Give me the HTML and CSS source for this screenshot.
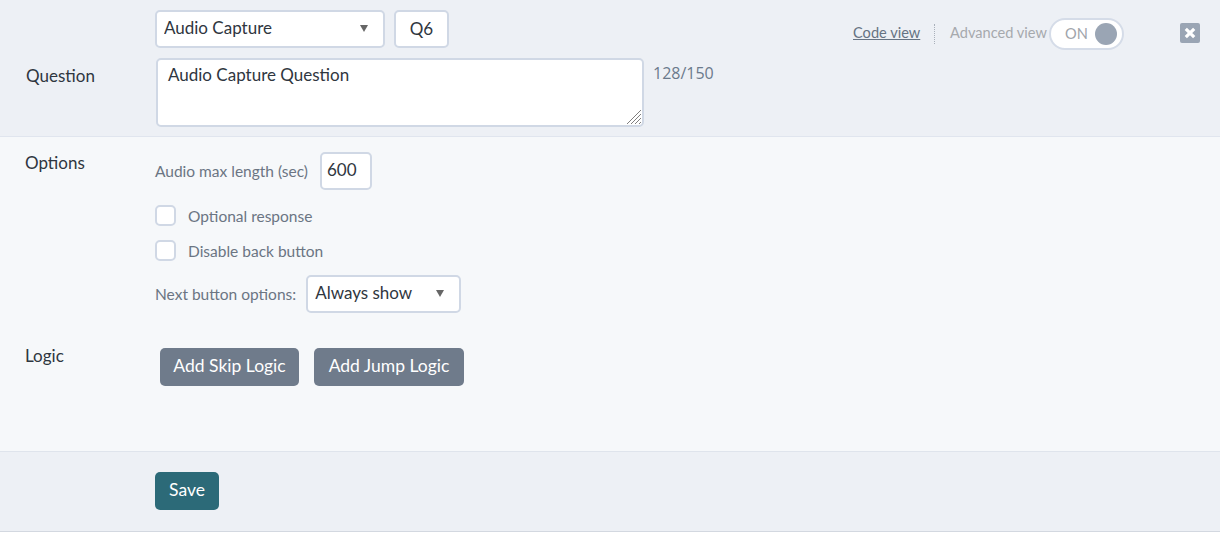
FILE: index.html
```html
<!DOCTYPE html>
<html lang="en">

<head>
    <meta charset="UTF-8">
    <title>Question editor</title>
    <link rel="stylesheet" href="styles.css">
</head>

<body>
    <div class="editor">
        <section class="question-panel">
            <div class="type-row">
                <div class="select-wrap type-select">
                    <select>
                        <option>Audio Capture</option>
                    </select>
                </div>
                <input class="text-box code-box" type="text" value="Q6">
                <div class="toolbar">
                    <a class="code-link" href="#">Code view</a>
                    <span class="toolbar-sep"></span>
                    <span class="toolbar-label">Advanced view</span>
                    <span class="toggle"><span class="toggle-text">ON</span><span class="toggle-knob"></span></span>
                    <span class="close-btn">
                        <svg width="14" height="14" viewBox="0 0 14 14">
                            <path d="M2.8 2.8 L11.2 11.2 M11.2 2.8 L2.8 11.2" stroke="#fff" stroke-width="3.2" fill="none" />
                        </svg>
                    </span>
                </div>
            </div>
            <div class="question-row">
                <label class="row-label question-label">Question</label>
                <div class="textarea-wrap">
                    <textarea class="question-text">Audio Capture Question</textarea>
                    <svg class="resize-grip" width="14" height="14" viewBox="0 0 14 14">
                        <path d="M14 0 L0 14 M14 4 L4 14 M14 8 L8 14 M14 12 L12 14" stroke="#807f7f" stroke-width="1" fill="none" />
                    </svg>
                </div>
                <span class="char-count">128/150</span>
            </div>
        </section>

        <section class="options-panel">
            <div class="options-row">
                <div class="row-label options-label">Options</div>
                <div class="options-body">
                    <div class="length-row">
                        <span class="field-label">Audio max length (sec)</span>
                        <input class="text-box length-box" type="text" value="600">
                    </div>
                    <label class="check-row first-check"><span class="check"></span>Optional response</label>
                    <label class="check-row"><span class="check"></span>Disable back button</label>
                    <div class="next-row">
                        <span class="field-label">Next button options:</span>
                        <div class="select-wrap next-select">
                            <select>
                                <option>Always show</option>
                            </select>
                        </div>
                    </div>
                </div>
            </div>
            <div class="logic-row">
                <div class="row-label logic-label">Logic</div>
                <div class="logic-buttons">
                    <button class="btn btn-grey skip-btn">Add Skip Logic</button>
                    <button class="btn btn-grey jump-btn">Add Jump Logic</button>
                </div>
            </div>
        </section>

        <section class="save-panel">
            <button class="btn btn-save">Save</button>
        </section>
    </div>
</body>

</html>
```

FILE: styles.css
```css
* {
    box-sizing: border-box;
}

body {
    margin: 0;
    background: #fff;
    color: #2f3640;
    font-family: Lato, "Open Sans", sans-serif;
    font-size: 17px;
}

.editor {
    width: 1220px;
}

/* top panel */
.question-panel {
    height: 137px;
    padding: 10px 0 0 155px;
    background: #edf0f5;
    border-bottom: 1px solid #e0e5ee;
}

.type-row {
    display: flex;
    height: 38px;
}

.select-wrap {
    position: relative;
}

.select-wrap select {
    width: 100%;
    height: 38px;
    padding: 0 0 3px 7px;
    appearance: none;
    background: #fff;
    border: 2px solid #d0d8e5;
    border-radius: 5px;
    color: #2f3640;
    font: 17px Lato, sans-serif;
}

.select-wrap::after {
    content: "";
    position: absolute;
    top: 15px;
    right: 17px;
    border-top: 7px solid #666;
    border-left: 4px solid transparent;
    border-right: 4px solid transparent;
}

.type-select {
    width: 230px;
}

.text-box {
    height: 38px;
    padding-bottom: 3px;
    background: #fff;
    border: 2px solid #d0d8e5;
    border-radius: 5px;
    color: #2f3640;
    font: 17px Lato, sans-serif;
}

.code-box {
    width: 55px;
    margin-left: 9px;
    text-align: center;
}

.toolbar {
    display: flex;
    align-items: center;
    height: 32px;
    margin: 8px 0 0 404px;
    font-size: 14.6px;
}

.code-link {
    width: 67px;
    margin-top: -3px;
    color: #667383;
    white-space: nowrap;
}

.toolbar-sep {
    height: 20px;
    margin: 0 15px 0 14px;
    border-left: 1px dotted #a9b0ba;
}

.toolbar-label {
    width: 99px;
    margin-top: -3px;
    color: #a6a9ad;
    white-space: nowrap;
}

.toggle {
    display: flex;
    align-items: center;
    justify-content: space-between;
    width: 75px;
    height: 32px;
    padding: 0 5px 0 14px;
    background: #fff;
    border: 2px solid #d5dce8;
    border-radius: 16px;
}

.toggle-text {
    margin-top: -2px;
    color: #a0a4aa;
}

.toggle-knob {
    width: 22px;
    height: 22px;
    background: #9aa5b4;
    border-radius: 50%;
}

.close-btn {
    display: flex;
    align-items: center;
    justify-content: center;
    width: 20px;
    height: 20px;
    margin: -2px 0 0 56px;
    background: #9aa5b4;
    border-radius: 2px;
}

.question-row {
    display: flex;
    margin: 10px 0 0 -155px;
}

.row-label {
    color: #2f3640;
    font-size: 17px;
}

.question-label {
    width: 156px;
    padding: 7px 0 0 26px;
}

.textarea-wrap {
    position: relative;
    width: 488px;
    height: 69px;
}

.question-text {
    display: block;
    width: 100%;
    height: 100%;
    padding: 4px 10px;
    background: #fff;
    border: 2px solid #d0d8e5;
    border-radius: 5px;
    color: #2f3640;
    font: 17px Lato, sans-serif;
    resize: none;
}

.resize-grip {
    position: absolute;
    right: 3px;
    bottom: 3px;
}

.char-count {
    margin: 4px 0 0 9px;
    color: #6b7a8c;
    font: 16px "Open Sans", sans-serif;
}

/* options */
.options-panel {
    height: 315px;
    background: #f6f8fa;
    border-bottom: 1px solid #dfe4ec;
}

.options-row {
    display: flex;
    padding-top: 15px;
}

.options-label {
    width: 155px;
    padding: 0 0 0 25px;
}

.options-body {
    font-size: 15.5px;
    color: #6b7583;
}

.length-row {
    display: flex;
    align-items: center;
}

.field-label {
    margin-top: -1px;
    color: #6b7583;
}

.length-box {
    width: 52px;
    margin-left: 12px;
    padding: 0 5px 3px;
}

.check-row {
    display: flex;
    align-items: center;
    height: 21px;
    margin-top: 14px;
}

.first-check {
    margin-top: 15px;
}

.check {
    width: 21px;
    height: 21px;
    margin-right: 12px;
    background: #fff;
    border: 2px solid #d0d8e5;
    border-radius: 5px;
}

.next-row {
    display: flex;
    align-items: center;
    margin-top: 14px;
}

.next-select {
    width: 155px;
    margin-left: 10px;
}

.logic-row {
    display: flex;
    margin-top: 35px;
}

.logic-label {
    width: 155px;
    padding: 0 0 0 25px;
    margin-top: -3px;
}

.logic-buttons {
    display: flex;
    gap: 15px;
    padding-left: 5px;
}

.btn {
    height: 38px;
    padding: 0 0 3px;
    border: 0;
    border-radius: 5px;
    color: #fff;
    font: 17.5px Lato, sans-serif;
}

.btn-grey {
    background: #6f7b8b;
}

.skip-btn {
    width: 139px;
}

.jump-btn {
    width: 150px;
}

/* footer */
.save-panel {
    height: 80px;
    padding: 20px 0 0 155px;
    background: #edf0f5;
    border-bottom: 1px solid #d3d8e0;
}

.btn-save {
    width: 64px;
    background: #2c6a78;
}
```
